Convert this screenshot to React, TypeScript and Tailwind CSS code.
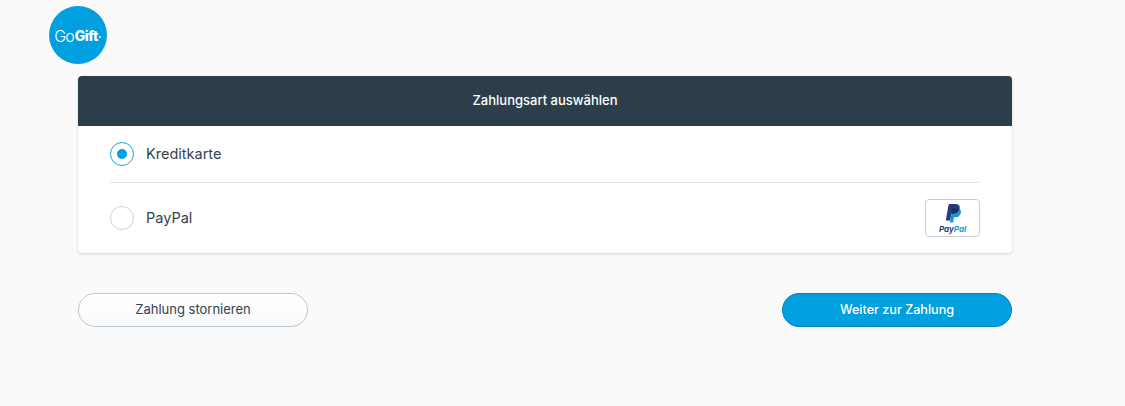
import React from "react";

function PayPalMark() {
  return (
    <svg width="16" height="20" viewBox="0 0 16 20" className="block">
      <path d="M5.2 0h5.3c3 0 4.6 1.6 4.2 4.4-.5 3.6-2.8 5.4-6 5.4H6.4L5.3 16.4H.8L3.4 1.4C3.5.6 4.3 0 5.2 0z" fill="#253b80" />
      <path d="M14.1 4.6c1.5.8 2.1 2.2 1.8 4-.5 3-2.5 4.7-5.4 4.7H9L8.2 18.6H4.6l.7-2.2 1.1-6.6h2.3c3.1 0 5.1-1.9 5.4-5.2z" fill="#179bd7" />
      <path d="M6.4 9.8h2.3c2.9 0 4.9-1.8 5.4-5.2-1-.5-2-.7-3.2-.7H7.3z" fill="#222d65" />
    </svg>
  );
}

function Radio({ checked }: { checked?: boolean }) {
  return (
    <span
      className={`flex h-6 w-6 shrink-0 items-center justify-center rounded-full border bg-white ${
        checked ? "border-[#12a5e2]" : "border-[#ccd4dd]"
      }`}
    >
      {checked && <span className="h-2.5 w-2.5 rounded-full bg-[#009fe0]" />}
    </span>
  );
}

export default function App() {
  return (
    <div className="h-[406px] w-[1125px] overflow-hidden bg-[#fafafa] font-['Inter',sans-serif] text-[#33434f]">
      <div className="pl-[49px] pt-[6px]">
        <div className="flex h-[58px] w-[58px] items-center justify-center rounded-full bg-[#009fe0] pr-[1px] pt-[1px] text-white">
          <span className="text-[16px] font-light leading-none tracking-[-0.9px]">Go</span>
          <span className="ml-[1px] text-[14px] font-extrabold leading-none tracking-[-0.5px]">Gift</span>
          <span className="ml-[1px] mt-[2px] h-[2px] w-[2px] rounded-full bg-white" />
        </div>
      </div>

      <div className="ml-[78px] mt-[12px] w-[934px]">
        <div className="overflow-hidden rounded-[4px] bg-white shadow-[0_1px_3px_rgba(0,0,0,0.16)]">
          <div className="flex h-[50px] items-center justify-center bg-[#2c3e4a] text-[13px] font-medium text-white">
            Zahlungsart auswählen
          </div>
          <div className="px-8">
            <div className="flex h-[57px] items-center gap-3 border-b border-[#e1e4ea]">
              <Radio checked />
              <span className="text-[14.5px]">Kreditkarte</span>
            </div>
            <div className="flex h-[70px] items-center gap-3">
              <Radio />
              <span className="text-[14.5px]">PayPal</span>
              <div className="ml-auto flex h-[38px] w-[55px] flex-col items-center justify-center rounded-[4px] border border-[#c5ced8] bg-white">
                <PayPalMark />
                <span className="mt-[1px] text-[8px] font-bold italic leading-none">
                  <span className="text-[#253b80]">Pay</span>
                  <span className="text-[#179bd7]">Pal</span>
                </span>
              </div>
            </div>
          </div>
        </div>

        <div className="mt-10 flex items-center justify-between">
          <button className="h-[34px] w-[230px] rounded-full border border-[#bcc7d6] bg-gradient-to-b from-white to-[#f9fafc] text-[13px]">
            Zahlung stornieren
          </button>
          <button className="h-[34px] w-[230px] rounded-full border border-[#0085bd] bg-[#009fe0] text-[12.6px] font-medium text-white">
            Weiter zur Zahlung
          </button>
        </div>
      </div>
    </div>
  );
}
